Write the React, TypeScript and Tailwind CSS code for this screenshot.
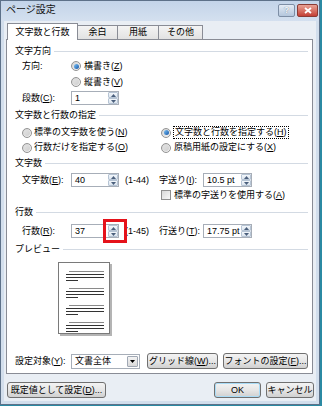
import React from "react";

const U = ({ c }: { c: string }) => <span className="underline underline-offset-1">{c}</span>;

function Radio({ checked }: { checked?: boolean }) {
  return (
    <span className="flex h-[10px] w-[10px] shrink-0 items-center justify-center rounded-full border border-[#939393] bg-gradient-to-br from-[#d2d2d2] to-[#f6f6f6]">
      {checked ? (
        <span className="h-[5px] w-[5px] rounded-full bg-gradient-to-br from-[#7cc3f5] to-[#1556a8]" />
      ) : (
        <span className="h-[6px] w-[6px] rounded-full bg-gradient-to-br from-[#e2e2e2] to-[#cfcfcf]" />
      )}
    </span>
  );
}

function Arrow({ down }: { down?: boolean }) {
  return (
    <svg width="5" height="3" viewBox="0 0 5 3">
      <path d={down ? "M0 0 L5 0 L2.5 3Z" : "M0 3 L2.5 0 L5 3Z"} fill="#4a5f7c" />
    </svg>
  );
}

function Spinner() {
  return (
    <span className="flex h-[12px] w-[10px] shrink-0 flex-col">
      <span className="flex h-[6px] items-center justify-center rounded-[1px] border border-[#b6c4d4] bg-gradient-to-b from-[#f3f7fb] to-[#dbe4ee]">
        <Arrow />
      </span>
      <span className="flex h-[6px] items-center justify-center rounded-[1px] border border-[#b6c4d4] bg-gradient-to-b from-[#f3f7fb] to-[#dbe4ee]">
        <Arrow down />
      </span>
    </span>
  );
}

function NumInput({ value, className }: { value: string; className: string }) {
  return (
    <div className={`flex h-[14px] shrink-0 items-center border border-[#a7aeb8] bg-white pl-[3px] ${className}`}>
      <span className="flex-1 whitespace-nowrap leading-none">{value}</span>
      <Spinner />
    </div>
  );
}

function Heading({ text, className }: { text: string; className: string }) {
  return (
    <div className={`flex shrink-0 items-center pl-[8px] pr-[4px] ${className}`}>
      <span className="leading-none">{text}</span>
      <span className="ml-[3px] h-px flex-1 bg-[#d3dae3]" />
    </div>
  );
}

function Btn({ children, className }: { children: React.ReactNode; className: string }) {
  return (
    <div
      className={`flex h-[16px] shrink-0 items-center justify-center whitespace-nowrap rounded-[3px] border border-[#707070] bg-gradient-to-b from-[#f3f3f3] via-[#e6e6e6] to-[#d0d0d0] leading-none ${className}`}
    >
      {children}
    </div>
  );
}

function PageLines() {
  const groups = [0, 1, 2, 3];
  return (
    <div className="flex flex-col gap-[7px] pt-[8px]">
      {groups.map((g) => (
        <div key={g} className="flex flex-col gap-[2px]">
          <div className="ml-[10px] h-px w-[35px] bg-[#8a8a8a]" />
          <div className="ml-[7px] h-px w-[38px] bg-[#333333]" />
          <div className="ml-[7px] h-px w-[38px] bg-[#333333]" />
          <div className="ml-[7px] h-px w-[12px] bg-[#333333]" />
        </div>
      ))}
    </div>
  );
}

export default function App() {
  return (
    <div className="h-[406px] w-[322px] overflow-hidden bg-[#2b8aa3] font-[family-name:'Liberation_Sans','Noto_Sans_CJK_JP',sans-serif] text-[9px] text-black">
      <div className="flex h-[405px] w-[320px] flex-col border border-[#5d7189] bg-[#d2deec]">
        {/* title bar */}
        <div className="flex h-[20px] shrink-0 items-start justify-between bg-gradient-to-b from-[#c3d4e9] to-[#d4e0ef] pl-[5px] pr-[1px]">
          <span className="mt-[4px] text-[10px] leading-none text-[#111]">ページ設定</span>
          <div className="mt-[3px] flex gap-[2px]">
            <div className="flex h-[13px] w-[17px] items-center justify-center rounded-[2px] border border-[#7d8ea5] bg-gradient-to-b from-[#e4ecf5] to-[#b4c6dc] text-[9px] font-bold leading-none text-[#f4f7fb]">
              <span className="[text-shadow:0_0_1px_#55677f]">?</span>
            </div>
            <div className="flex h-[13px] w-[21px] items-center justify-center rounded-[2px] border border-[#8b3b34] bg-gradient-to-b from-[#e8a195] to-[#c33e35]">
              <svg width="8" height="7" viewBox="0 0 8 7">
                <path d="M1 1 L7 6 M7 1 L1 6" stroke="#ffffff" strokeWidth="1.8" />
              </svg>
            </div>
          </div>
        </div>

        {/* client area */}
        <div className="mx-[3px] flex h-[380px] flex-col bg-[#e9eef4] px-[2px] pt-[2px]">
          {/* tabs */}
          <div className="ml-[1px] flex h-[16px] shrink-0 items-end">
            <div className="relative z-10 -mb-px flex h-[17px] w-[71px] items-center justify-center border border-b-0 border-[#898c95] bg-white leading-none">
              文字数と行数
            </div>
            <div className="-ml-px flex h-[14px] w-[41px] items-center justify-center border border-b-0 border-[#898c95] bg-gradient-to-b from-[#f4f4f4] to-[#e2e2e2] leading-none">
              余白
            </div>
            <div className="-ml-px flex h-[14px] w-[42px] items-center justify-center border border-b-0 border-[#898c95] bg-gradient-to-b from-[#f4f4f4] to-[#e2e2e2] leading-none">
              用紙
            </div>
            <div className="-ml-px flex h-[14px] w-[45px] items-center justify-center border border-b-0 border-[#898c95] bg-gradient-to-b from-[#f4f4f4] to-[#e2e2e2] leading-none">
              その他
            </div>
          </div>

          {/* panel */}
          <div className="flex h-[335px] w-[307px] shrink-0 flex-col border border-[#898c95] bg-white pt-[4px]">
            <Heading text="文字方向" className="h-[14px]" />
            <div className="flex h-[16px] shrink-0 items-center pl-[15px]">
              <span className="w-[49px] leading-none">方向:</span>
              <Radio checked />
              <span className="ml-[3px] leading-none">
                横書き(<U c="Z" />)
              </span>
            </div>
            <div className="flex h-[16px] shrink-0 items-center pl-[64px]">
              <Radio />
              <span className="ml-[3px] leading-none">
                縦書き(<U c="V" />)
              </span>
            </div>
            <div className="flex h-[16px] shrink-0 items-center pl-[15px]">
              <span className="w-[49px] leading-none">
                段数(<U c="C" />):
              </span>
              <NumInput value="1" className="w-[48px]" />
            </div>

            <Heading text="文字数と行数の指定" className="mt-[1px] h-[16px]" />
            <div className="mt-[2px] flex h-[15px] shrink-0 items-center pl-[15px]">
              <div className="flex w-[139px] items-center">
                <Radio />
                <span className="ml-[2px] leading-none">
                  標準の文字数を使う(<U c="N" />)
                </span>
              </div>
              <Radio checked />
              <span className="ml-[2px] border border-dotted border-black px-px py-[1px] leading-none">
                文字数と行数を指定する(<U c="H" />)
              </span>
            </div>
            <div className="flex h-[15px] shrink-0 items-center pl-[15px]">
              <div className="flex w-[139px] items-center">
                <Radio />
                <span className="ml-[2px] leading-none">
                  行数だけを指定する(<U c="O" />)
                </span>
              </div>
              <Radio />
              <span className="ml-[3px] leading-none">
                原稿用紙の設定にする(<U c="X" />)
              </span>
            </div>

            <Heading text="文字数" className="h-[16px]" />
            <div className="mt-[1px] flex h-[16px] shrink-0 items-center pl-[15px]">
              <span className="w-[49px] leading-none">
                文字数(<U c="E" />):
              </span>
              <div className="flex w-[88px] items-center">
                <NumInput value="40" className="w-[48px]" />
                <span className="ml-[6px] leading-none">(1-44)</span>
              </div>
              <span className="w-[44px] whitespace-nowrap leading-none">
                字送り(<U c="I" />):
              </span>
              <NumInput value="10.5 pt" className="w-[49px]" />
            </div>
            <div className="flex h-[14px] shrink-0 items-center pl-[154px]">
              <span className="h-[10px] w-[10px] border border-[#8f8f8f] bg-gradient-to-br from-[#d8d8d8] to-[#f8f8f8]" />
              <span className="ml-[3px] leading-none">
                標準の字送りを使用する(<U c="A" />)
              </span>
            </div>

            <Heading text="行数" className="mt-[2px] h-[16px]" />
            <div className="mt-[3px] flex h-[16px] shrink-0 items-center pl-[15px]">
              <span className="w-[49px] leading-none">
                行数(<U c="R" />):
              </span>
              <div className="flex w-[88px] items-center">
                <div className="relative">
                  <NumInput value="37" className="w-[48px]" />
                  <div className="absolute left-[32px] top-[-5px] h-[24px] w-[24px] border-[3px] border-[#e5121a]" />
                </div>
                <span className="ml-[6px] leading-none">(1-45)</span>
              </div>
              <span className="w-[44px] whitespace-nowrap leading-none">
                行送り(<U c="T" />):
              </span>
              <NumInput value="17.75 pt" className="w-[49px]" />
            </div>

            <Heading text="プレビュー" className="mt-[2px] h-[16px]" />
            <div className="ml-[51px] mt-[5px] flex shrink-0">
              <div className="h-[72px] w-[52px] border border-[#7a7a7a] bg-white shadow-[2px_2px_0_#b4b4b4]">
                <PageLines />
              </div>
            </div>

            <div className="mt-[19px] flex h-[16px] shrink-0 items-center pl-[8px]">
              <span className="w-[56px] whitespace-nowrap leading-none">
                設定対象(<U c="Y" />):
              </span>
              <div className="flex h-[15px] w-[69px] items-center border border-[#a7aeb8] bg-white pl-[3px]">
                <span className="flex-1 leading-none">文書全体</span>
                <span className="mr-px flex h-[11px] w-[11px] items-center justify-center rounded-[1px] border border-[#a0a8b4] bg-gradient-to-b from-[#f4f4f4] to-[#d9d9d9]">
                  <svg width="5" height="3" viewBox="0 0 5 3">
                    <path d="M0 0 L5 0 L2.5 3Z" fill="#000" />
                  </svg>
                </span>
              </div>
              <Btn className="ml-[7px] w-[71px]">
                グリッド線(<U c="W" />)...
              </Btn>
              <Btn className="ml-[5px] w-[85px]">
                フォントの設定(<U c="F" />)...
              </Btn>
            </div>
          </div>

          {/* bottom buttons */}
          <div className="mt-[8px] flex h-[16px] shrink-0 items-center">
            <Btn className="ml-[1px] w-[99px]">
              既定値として設定(<U c="D" />)...
            </Btn>
            <div className="flex-1" />
            <Btn className="w-[47px] border-[#3c7fb1] shadow-[inset_0_0_0_1px_#a9dcf7]">OK</Btn>
            <Btn className="ml-[5px] w-[48px]">キャンセル</Btn>
          </div>
        </div>
      </div>
    </div>
  );
}
